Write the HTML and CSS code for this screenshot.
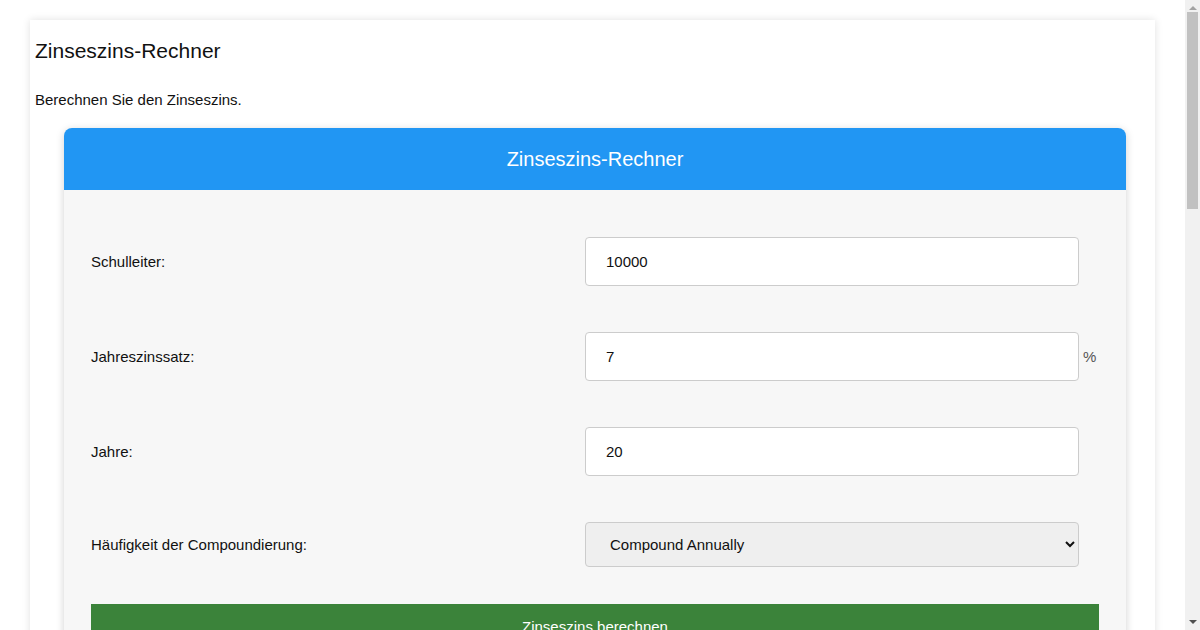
FILE: index.html
```html
<!DOCTYPE html>
<html lang="de">
<head>
  <meta charset="UTF-8" />
  <meta name="viewport" content="width=device-width, initial-scale=1.0"/>
  <title>Zinseszins-Rechner</title>
  <link rel="stylesheet" href="styles.css">
</head>
<body>

  <div class="page">
    <h1>Zinseszins-Rechner</h1>
    <p class="intro">Berechnen Sie den Zinseszins.</p>

    <div class="calc">
      <div class="calc-head">Zinseszins-Rechner</div>
      <form class="calc-body" id="calcForm">
        <div class="row">
          <label for="principal">Schulleiter:</label>
          <input type="text" id="principal" value="10000">
          <span class="unit"></span>
        </div>
        <div class="row">
          <label for="rate">Jahreszinssatz:</label>
          <input type="text" id="rate" value="7">
          <span class="unit">%</span>
        </div>
        <div class="row">
          <label for="years">Jahre:</label>
          <input type="text" id="years" value="20">
          <span class="unit"></span>
        </div>
        <div class="row">
          <label for="freq">Häufigkeit der Compoundierung:</label>
          <select id="freq">
            <option value="1">Compound Annually</option>
            <option value="2">Compound Semi-Annually</option>
            <option value="4">Compound Quarterly</option>
            <option value="12">Compound Monthly</option>
            <option value="365">Compound Daily</option>
          </select>
          <span class="unit"></span>
        </div>
        <button type="submit" class="calc-btn">Zinseszins berechnen</button>
        <div class="result" id="result"></div>
      </form>
    </div>
  </div>

  <!-- window scrollbar (the page runs past the fold) -->
  <div class="scrollbar">
    <span class="arrow up"></span>
    <span class="thumb"></span>
    <span class="arrow down"></span>
  </div>

</body>
</html>
```

FILE: styles.css
```css
* {
  box-sizing: border-box;
}

body {
  margin: 0;
  padding: 20px 45px 40px 30px;
  font-family: "Liberation Sans", Arial, sans-serif;
  color: #111;
  background: #fff;
}

.page {
  background: #fff;
  padding: 19px 5px 40px;
  box-shadow: 0 0 8px rgba(0, 0, 0, 0.12);
}

.page h1 {
  font-size: 21px;
  font-weight: normal;
  margin: 0 0 28px;
}

.intro {
  font-size: 15px;
  margin: 0 0 20px;
}

.calc {
  width: 1062px;
  margin-left: 29px;
  border-radius: 8px;
  overflow: hidden;
  background: #f7f7f7;
  box-shadow: 0 2px 8px rgba(0, 0, 0, 0.18);
}

.calc-head {
  background: #2196f3;
  color: #fff;
  font-size: 20px;
  height: 62px;
  line-height: 62px;
  text-align: center;
}

.calc-body {
  padding: 47px 27px 40px;
}

.row {
  display: grid;
  grid-template-columns: 1fr 494px 20px;
  align-items: center;
  margin-bottom: 46px;
  font-size: 15px;
}

.row input,
.row select {
  font-family: inherit;
  font-size: 15px;
  color: #111;
  border: 1px solid #ccc;
  border-radius: 4px;
}

.row input {
  height: 49px;
  padding: 0 20px;
  background: #fff;
}

.row select {
  height: 45px;
  padding: 0 20px;
  background-color: #efefef;
}

.unit {
  padding-left: 4px;
  color: #555;
}

.calc-btn {
  display: block;
  width: 100%;
  margin-top: -9px;
  height: 44px;
  border: none;
  background: #3b833a;
  color: #fff;
  font-family: inherit;
  font-size: 15px;
  cursor: pointer;
}

.result {
  min-height: 120px;
}

.scrollbar {
  position: fixed;
  top: 0;
  right: 0;
  width: 15px;
  height: 100%;
  background: #f1f1f1;
  display: flex;
  flex-direction: column;
  align-items: center;
}

.scrollbar .thumb {
  width: 11px;
  height: 197px;
  margin-top: 2px;
  background: #c1c1c1;
  flex: none;
}

.scrollbar .arrow {
  width: 0;
  height: 0;
  border-left: 4px solid transparent;
  border-right: 4px solid transparent;
  flex: none;
}

.scrollbar .up {
  margin-top: 6px;
  border-bottom: 4px solid #a3a3a3;
}

.scrollbar .down {
  margin-top: auto;
  margin-bottom: 6px;
  border-top: 4px solid #505050;
}
```
